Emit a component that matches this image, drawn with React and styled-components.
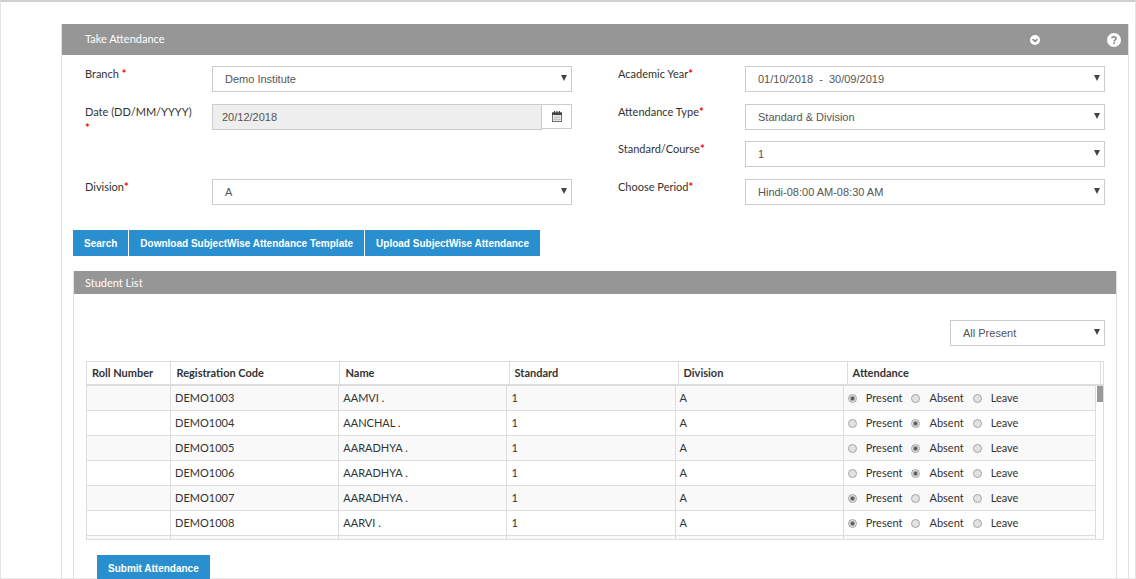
import React from 'react';
import styled, { createGlobalStyle, css } from 'styled-components';

const GlobalStyle = createGlobalStyle`
    * {
        box-sizing: border-box;
    }
    body {
        margin: 0;
        background-color: #ffffff;
        color: #333333;
        font-family: Lato, "Open Sans", sans-serif;
        font-size: 11px;
        line-height: 16px;
    }
`
const Page = styled.div`
    height: 100vh;
    overflow: hidden;
    padding: 22px 6px 0 60px;
    border: 1px solid #e4e4e4;
    border-top: 2px solid #d0d0d0;
    border-bottom: none;
    box-shadow: inset 0 -1px 0 #e8e8e8;
`
const Panel = styled.section`
    border: 1px solid #e0e0e0;
    border-top: none;
    padding-bottom: 30px;
`
const PanelHeader = styled.header`
    display: flex;
    align-items: center;
    height: 31px;
    padding: 0 7px 0 23px;
    background-color: #969696;
    color: #ffffff;
`
const Title = styled.h1`
    flex: 1;
    margin: 0;
    padding-bottom: 2px;
    font-size: 11px;
    font-weight: 400;
`
const IconButton = styled.button`
    display: flex;
    padding: 0;
    border: none;
    background: none;
    cursor: pointer;
`
const HeaderIcons = styled.div`
    display: flex;
    align-items: center;
    gap: 67px;
`
const Form = styled.form`
    display: grid;
    grid-template-columns: 1fr 1fr;
    grid-auto-rows: 27px 26px;
    gap: 11px 46px;
    padding: 11px 23px 25px;
`
const Field = styled.div`
    display: grid;
    grid-template-columns: 127px 1fr;
    grid-column: ${props => props.$column};
    grid-row: ${props => props.$row};
    height: 26px;
`
const Label = styled.label`
    padding-right: 20px;
    line-height: 16px;
`
const Required = styled.span`
    color: #ff0000;
    font-weight: 700;
    line-height: 8px;
`
const controlStyle = css`
    width: 100%;
    height: 26px;
    border: 1px solid #cccccc;
    border-radius: 0;
    color: #555555;
    font-family: "Liberation Sans", Arial, sans-serif;
    font-size: 11px;
`
const SelectWrap = styled.div`
    position: relative;
    width: ${props => props.$width || '100%'};
`
const SelectBox = styled.select`
    ${controlStyle}
    display: block;
    appearance: none;
    padding: 0 20px 0 12px;
    background-color: #ffffff;
`
const Arrow = styled.span`
    position: absolute;
    top: 9px;
    right: 5px;
    border: solid transparent;
    border-width: 6px 3px 0;
    border-top-color: #444444;
    pointer-events: none;
`
const DateGroup = styled.div`
    display: flex;
`
const DateInput = styled.input`
    ${controlStyle}
    flex: 1;
    padding: 0 9px;
    background-color: #eeeeee;
`
const DateButton = styled(IconButton)`
    align-items: center;
    justify-content: center;
    width: 30px;
    height: 25px;
    border: 1px solid #cccccc;
    border-left: none;
`
const Button = styled.button`
    height: 26px;
    padding: 0 10px;
    border: 1px solid #2a8fce;
    background-color: #2a8fce;
    color: #ffffff;
    font-family: "Liberation Sans", Arial, sans-serif;
    font-size: 10px;
    font-weight: 700;
    cursor: pointer;
`
const Actions = styled.div`
    display: flex;
    gap: 1px;
    padding: 0 11px 15px;
`
const StudentPanel = styled(Panel)`
    margin: 0 11px;
`
const StudentHeader = styled(PanelHeader)`
    height: 23px;
    padding: 0 11px;
`
const StudentTitle = styled(Title).attrs({ as: 'h2' })`
    padding-bottom: 0;
`
const StudentBody = styled.div`
    padding: 26px 11px 0 12px;
`
const Filter = styled.div`
    display: flex;
    justify-content: flex-end;
    margin-bottom: 15px;
`
const Grid = styled.div`
    margin-right: 1px;
    border: 1px solid #dddddd;
`
const GridHead = styled.div`
    padding-right: 2px;
    border-bottom: 2px solid #dddddd;
`
const GridScroll = styled.div`
    display: flex;
    gap: 1px;
    height: 153px;
    overflow: hidden;
`
const Scrollbar = styled.div`
    flex: none;
    width: 6px;
`
const Thumb = styled.div`
    height: 16px;
    background-color: #999999;
`
const Table = styled.table`
    width: 100%;
    height: fit-content;
    table-layout: fixed;
    border-collapse: separate;
    border-spacing: 0;
`
const HeadCell = styled.th`
    height: 22px;
    padding: 0 5px;
    border-right: 1px solid #dddddd;
    text-align: left;
    font-weight: 700;
`
const Row = styled.tr`
    background-color: ${props => props.$odd ? '#f9f9f9' : '#ffffff'};
`
const Cell = styled.td`
    height: 25px;
    padding: 0 4px;
    border-right: 1px solid #dddddd;
    border-bottom: 1px solid #dddddd;
    white-space: nowrap;
`
const Choices = styled.div`
    display: flex;
    gap: 9px;
`
const Choice = styled.label`
    display: flex;
    align-items: center;
    gap: 9px;
`
const Radio = styled.input`
    appearance: none;
    width: 9px;
    height: 9px;
    margin: 0;
    border: 1px solid #a5a5a5;
    border-radius: 50%;
    background: #e2e2e2;

    &:checked {
        background: radial-gradient(circle, #555555 1px, #e2e2e2 3px);
    }
`
const Submit = styled.div`
    padding: 15px 11px 0;
`

const statuses = ['Present', 'Absent', 'Leave'];
const headings = ['Roll Number', 'Registration Code', 'Name', 'Standard', 'Division', 'Attendance'];
const students = [
    { code: 'DEMO1003', name: 'AAMVI .', status: 'Present' },
    { code: 'DEMO1004', name: 'AANCHAL .', status: 'Absent' },
    { code: 'DEMO1005', name: 'AARADHYA .', status: 'Absent' },
    { code: 'DEMO1006', name: 'AARADHYA .', status: 'Absent' },
    { code: 'DEMO1007', name: 'AARADHYA .', status: 'Present' },
    { code: 'DEMO1008', name: 'AARVI .', status: 'Present' },
];

const Col = styled.col`
    width: ${props => props.$width};
`
const Columns = () => (
    <colgroup>
        <Col $width="8.33%" />
        <Col $width="16.67%" />
        <Col $width="16.67%" />
        <Col $width="16.67%" />
        <Col $width="16.67%" />
        <Col />
    </colgroup>
)

const ChevronIcon = () => (
    <svg width="10" height="10" viewBox="0 0 10 10">
        <circle cx="5" cy="5" r="5" fill="#ffffff" />
        <path d="M2.6 4.1 L5 6.4 L7.4 4.1" fill="none" stroke="#888888" strokeWidth="1.5" />
    </svg>
)

const HelpIcon = () => (
    <svg width="14" height="14" viewBox="0 0 14 14">
        <circle cx="7" cy="7" r="7" fill="#ffffff" />
        <path d="M4.9 5.3 C5 3.2 9.1 3.2 9.1 5.4 C9.1 6.8 7.1 6.8 7.1 8.5" fill="none" stroke="#8a8a8a" strokeWidth="1.6" />
        <rect x="6.2" y="9.4" width="1.8" height="1.6" fill="#8a8a8a" />
    </svg>
)

const CalendarIcon = () => (
    <svg width="10" height="11" viewBox="0 0 10 11">
        <rect x="0.5" y="2" width="9" height="8.5" fill="#ffffff" stroke="#666666" />
        <rect x="0" y="1.5" width="10" height="2.5" fill="#444444" />
        <path d="M2.5 0 V3 M5 0 V3 M7.5 0 V3" stroke="#444444" strokeWidth="1.2" />
        <path d="M3 4 V10.5 M5 4 V10.5 M7 4 V10.5 M0.5 6.2 H9.5 M0.5 8.4 H9.5" stroke="#b0b0b0" strokeWidth="0.7" />
    </svg>
)

function Select({ id, value, width, label }) {
    return (
        <SelectWrap $width={width}>
            <SelectBox id={id} aria-label={label}>
                <option>{value}</option>
            </SelectBox>
            <Arrow />
        </SelectWrap>
    )
}

function SelectField({ id, label, value, column, row }) {
    return (
        <Field $column={column} $row={row}>
            <Label htmlFor={id}>{label}<Required>*</Required></Label>
            <Select id={id} value={value} />
        </Field>
    )
}

export default class App extends React.Component {
    constructor(props) {
        super(props);
        this.state = { students };
    }
    setStatus = (code, status) => {
        this.setState({
            students: this.state.students.map(s => s.code === code ? { ...s, status } : s)
        });
    }

    render() {
        return (
            <Page>
                <GlobalStyle />
                <Panel>
                    <PanelHeader>
                        <Title>Take Attendance</Title>
                        <HeaderIcons>
                            <IconButton type="button" aria-label="Collapse"><ChevronIcon /></IconButton>
                            <IconButton type="button" aria-label="Help"><HelpIcon /></IconButton>
                        </HeaderIcons>
                    </PanelHeader>
                    <Form>
                        <SelectField id="branch" label="Branch " value="Demo Institute" column={1} row={1} />
                        <SelectField id="year" label="Academic Year" value={'01/10/2018\u00a0 -\u00a0 30/09/2019'} column={2} row={1} />
                        <Field $column={1} $row={2}>
                            <Label htmlFor="date">Date (DD/MM/YYYY) <Required>*</Required></Label>
                            <DateGroup>
                                <DateInput id="date" defaultValue="20/12/2018" readOnly />
                                <DateButton type="button" aria-label="Pick a date"><CalendarIcon /></DateButton>
                            </DateGroup>
                        </Field>
                        <SelectField id="type" label="Attendance Type" value="Standard & Division" column={2} row={2} />
                        <SelectField id="standard" label="Standard/Course" value="1" column={2} row={3} />
                        <SelectField id="division" label="Division" value="A" column={1} row={4} />
                        <SelectField id="period" label="Choose Period" value="Hindi-08:00 AM-08:30 AM" column={2} row={4} />
                    </Form>
                    <Actions>
                        <Button type="button">Search</Button>
                        <Button type="button">Download SubjectWise Attendance Template</Button>
                        <Button type="button">Upload SubjectWise Attendance</Button>
                    </Actions>
                    <StudentPanel>
                        <StudentHeader>
                            <StudentTitle>Student List</StudentTitle>
                        </StudentHeader>
                        <StudentBody>
                            <Filter>
                                <Select id="all" label="Set attendance for all" value="All Present" width="155px" />
                            </Filter>
                            <Grid>
                                <GridHead>
                                    <Table>
                                        <Columns />
                                        <thead>
                                            <tr>
                                                {headings.map(h => <HeadCell key={h} scope="col">{h}</HeadCell>)}
                                            </tr>
                                        </thead>
                                    </Table>
                                </GridHead>
                                <GridScroll>
                                    <Table>
                                        <Columns />
                                        <tbody>
                                            {this.state.students.map((s, i) => (
                                                <Row key={s.code} $odd={i % 2 === 0}>
                                                    <Cell />
                                                    <Cell>{s.code}</Cell>
                                                    <Cell>{s.name}</Cell>
                                                    <Cell>1</Cell>
                                                    <Cell>A</Cell>
                                                    <Cell>
                                                        <Choices>
                                                            {statuses.map(status => (
                                                                <Choice key={status}>
                                                                    <Radio
                                                                        type="radio"
                                                                        name={s.code}
                                                                        checked={s.status === status}
                                                                        onChange={() => this.setStatus(s.code, status)}
                                                                    />
                                                                    {status}
                                                                </Choice>
                                                            ))}
                                                        </Choices>
                                                    </Cell>
                                                </Row>
                                            ))}
                                            <Row $odd>
                                                {headings.map(h => <Cell key={h} />)}
                                            </Row>
                                        </tbody>
                                    </Table>
                                    <Scrollbar><Thumb /></Scrollbar>
                                </GridScroll>
                            </Grid>
                            <Submit>
                                <Button type="button">Submit Attendance</Button>
                            </Submit>
                        </StudentBody>
                    </StudentPanel>
                </Panel>
            </Page>
        )
    }
}
